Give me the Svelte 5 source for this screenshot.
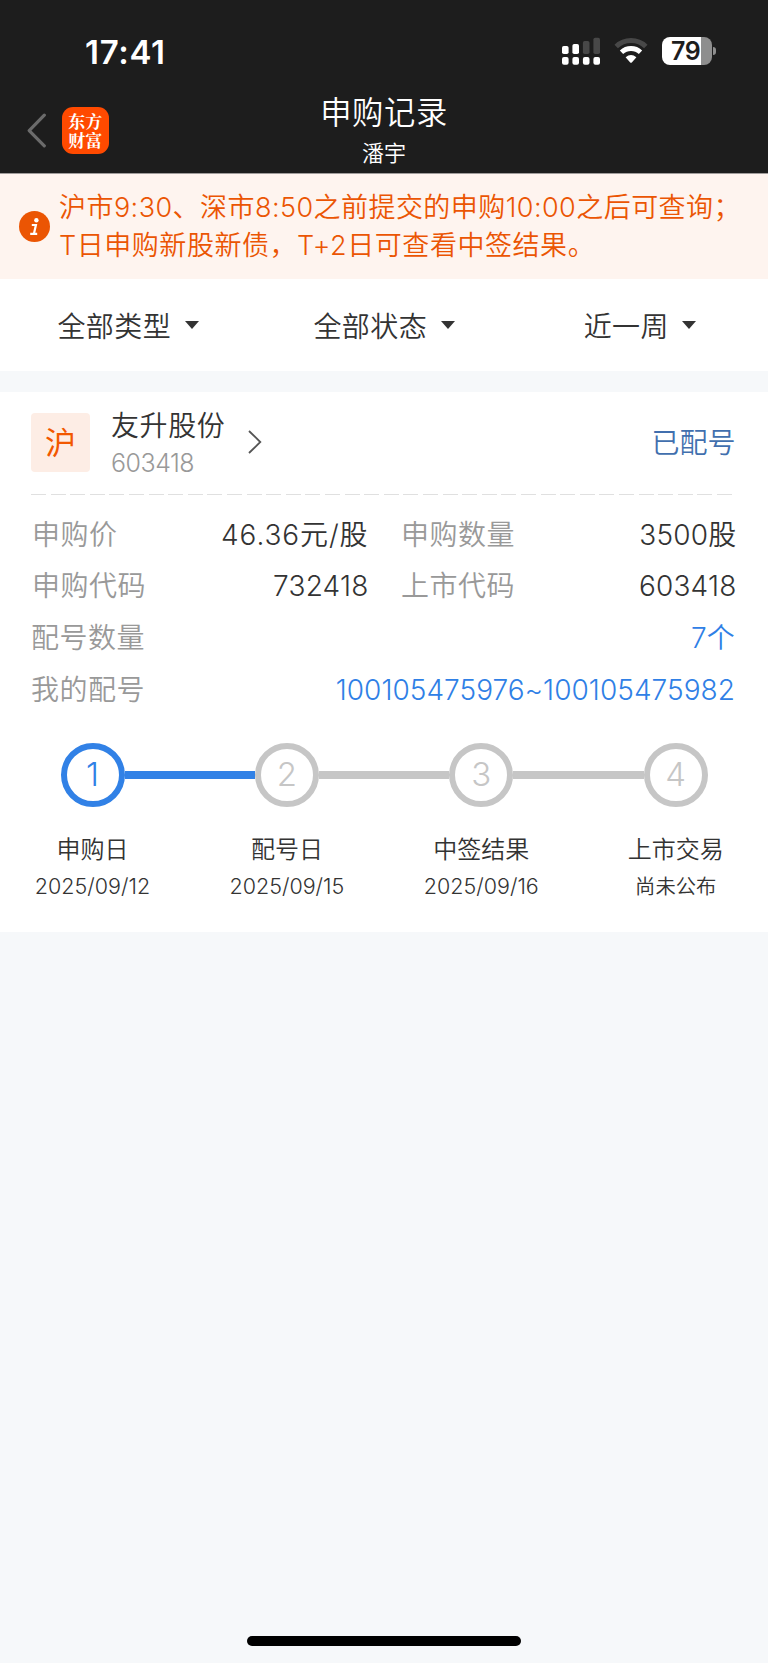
<script>
  const filters = ['全部类型', '全部状态', '近一周'];
  const details = [
    ['申购价', '46.36元/股', '申购数量', '3500股'],
    ['申购代码', '732418', '上市代码', '603418']
  ];
  const steps = [
    { n: 1, name: '申购日', date: '2025/09/12', active: true },
    { n: 2, name: '配号日', date: '2025/09/15' },
    { n: 3, name: '中签结果', date: '2025/09/16' },
    { n: 4, name: '上市交易', date: '尚未公布', plain: true }
  ];
</script>

<div class="page">
  <header>
    <div class="status">
      <span class="clock">17:41</span>
      <div class="indicators">
        <svg class="signal" width="39" height="28" viewBox="0 0 39 28">
          <g fill="#fff">
            <rect x="0" y="9" width="6.6" height="8" rx="1.8" />
            <rect x="10.4" y="7" width="6.6" height="10" rx="1.8" />
            <rect x="0" y="20" width="6.6" height="7.8" rx="2" />
            <rect x="10.4" y="20" width="6.6" height="7.8" rx="2" />
            <rect x="20.9" y="20" width="6.6" height="7.8" rx="2" />
            <rect x="31.4" y="20" width="6.6" height="7.8" rx="2" />
          </g>
          <g fill="#484848">
            <rect x="20.9" y="4" width="6.6" height="13" rx="1.8" />
            <rect x="31.4" y="0.7" width="6.6" height="16.3" rx="1.8" />
          </g>
        </svg>
        <svg class="wifi" width="34" height="26" viewBox="0 0 34 26">
          <path d="M2.2 8.5 A21.5 21.5 0 0 1 31.8 8.5" fill="none" stroke="#484848" stroke-width="5" />
          <path d="M7.5 14.3 A13.8 13.8 0 0 1 26.5 14.3" fill="none" stroke="#fff" stroke-width="4.8" />
          <path d="M11.6 19.2 Q17 14.8 22.4 19.2 L17.8 24.4 Q17 25.2 16.2 24.4 Z" fill="#fff" />
        </svg>
        <div class="battery"><span>79</span></div>
        <i class="nub"></i>
      </div>
    </div>
    <div class="nav">
      <div class="left">
        <svg width="20" height="36" viewBox="0 0 20 36">
          <path d="M17.3 2.2 L2.2 17.6 L17.3 32.8" fill="none" stroke="#6b6b6b" stroke-width="3.2" stroke-linecap="round" stroke-linejoin="round" />
        </svg>
        <div class="logo"><span>东方<br />财富</span></div>
      </div>
      <div class="titles">
        <h1>申购记录</h1>
        <p>潘宇</p>
      </div>
      <div></div>
    </div>
  </header>

  <section class="notice">
    <svg width="31" height="31" viewBox="0 0 31 31">
      <circle cx="15.5" cy="15.5" r="15.5" fill="#eb5503" />
      <circle cx="17.4" cy="9.2" r="2.2" fill="#fff" />
      <path d="M12.8 14 H16.9 L15 22.6 M11.2 22.8 H18.2" fill="none" stroke="#fff" stroke-width="2.2" />
    </svg>
    <div class="lines">
      <p class="first">沪市9:30、深市8:50之前提交的申购10:00之后可查询；</p>
      <p class="second">T日申购新股新债，T+2日可查看中签结果。</p>
    </div>
  </section>

  <nav class="filters">
    {#each filters as f}
      <div class="filter">
        <span>{f}</span>
        <svg width="14" height="8" viewBox="0 0 14 8"><path d="M0 0 H14 L7 8 Z" fill="#333" /></svg>
      </div>
    {/each}
  </nav>

  <main>
    <div class="stock">
      <div class="market">沪</div>
      <div class="names">
        <span class="name">友升股份</span>
        <span class="code">603418</span>
      </div>
      <svg class="go" width="14" height="24" viewBox="0 0 14 24"><path d="M1 1 L12.3 12 L1 23" fill="none" stroke="#555" stroke-width="1.8" /></svg>
      <span class="state">已配号</span>
    </div>
    <div class="dash"></div>
    <div class="details">
      {#each details as row, i}
        <div class="row two">
          <span class="label inset">{row[0]}</span><span class="value" class:wide={i === 0}>{row[1]}</span>
          <span class="label right">{row[2]}</span><span class="value">{row[3]}</span>
        </div>
      {/each}
      <div class="row"><span class="label">配号数量</span><span class="value blue">7个</span></div>
      <div class="row"><span class="label">我的配号</span><span class="value blue long">100105475976~100105475982</span></div>
    </div>
    <div class="steps">
      {#each steps as s}
        <div class="step" class:active={s.active}>
          <div class="track"><i></i><b>{s.n}</b><i class="next"></i></div>
          <span class="step-name">{s.name}</span>
          <span class="date" class:plain={s.plain}>{s.date}</span>
        </div>
      {/each}
    </div>
  </main>

  <footer><div class="home"></div></footer>
</div>

<style>
  :global(body) { margin: 0; background: #f6f8fa; }
  .page {
    width: 768px; height: 1663px; display: flex; flex-direction: column;
    font-family: Inter, "Noto Sans CJK SC", sans-serif; font-weight: 350;
    color: #333; background: #f6f8fa; overflow: hidden; white-space: nowrap;
  }
  h1, p { margin: 0; font-weight: 350; }
  svg { display: block; flex: none; }
  header { height: 173px; background: #1d1d1d; color: #fff; border-bottom: 1px solid #a09c9b; flex: none; }
  .status { height: 94px; display: flex; justify-content: space-between; padding: 0 52px 0 85px; box-sizing: border-box; }
  .clock { font-size: 33px; font-weight: 600; line-height: 40px; padding-top: 31.5px; letter-spacing: 0.7px; }
  .indicators { display: flex; padding-top: 37px; align-items: flex-start; }
  .wifi { margin: 1px 14px 0 13px; }
  .battery {
    width: 49.5px; height: 28px; border-radius: 8px; color: #1d1d1d; box-sizing: border-box;
    background: linear-gradient(90deg, #fff 39px, #8e8e8e 39px);
    font-size: 25px; font-weight: 600; line-height: 28px; padding-left: 9px; letter-spacing: -0.5px;
  }
  .nub { width: 3px; height: 8px; background: #8e8e8e; border-radius: 0 4px 4px 0; margin: 10px 0 0 1.5px; }
  .nav { display: grid; grid-template-columns: 1fr 200px 1fr; height: 79px; }
  .left { display: flex; padding: 13px 0 0 27px; }
  .left svg { margin-top: 6px; }
  .logo {
    margin-left: 15px; width: 46.5px; height: 46.5px; border-radius: 11px; background: #ff4a00;
    display: flex; align-items: center; justify-content: center;
    font-family: "Noto Serif CJK SC", "Noto Sans CJK SC", sans-serif; font-weight: 700; font-size: 17px; line-height: 19.5px;
  }
  .titles { text-align: center; }
  h1 { font-size: 31.3px; line-height: 39px; letter-spacing: 0.6px; }
  .titles p { font-size: 22px; line-height: 30px; padding-top: 4.5px; }
  .notice { height: 105px; flex: none; background: #fef4ef; color: #eb5503; display: flex; font-size: 27px; box-sizing: border-box; padding: 15px 0 0 18.5px; }
  .notice svg { margin-top: 21.5px; }
  .lines { margin-left: 9.5px; line-height: 37.5px; }
  .first { letter-spacing: 0.45px; }
  .second { letter-spacing: 0.55px; }
  .filters { display: grid; grid-template-columns: repeat(3, 256px); height: 92px; flex: none; background: #fff; }
  .filter { display: flex; align-items: center; justify-content: center; gap: 13.5px; font-size: 28px; letter-spacing: 0.4px; }
  .filter span { margin-top: -1px; }
  main { margin-top: 20.5px; height: 540.5px; background: #fff; flex: none; }
  .stock { display: flex; height: 102px; padding: 0 33px 0 31px; }
  .market { width: 59px; height: 59px; margin-top: 21.5px; border-radius: 4px; background: #fdede5; color: #f25800; font-size: 31px; line-height: 59px; text-align: center; font-weight: 400; }
  .names { margin: 15.5px 0 0 21px; width: 118px; display: flex; flex-direction: column; }
  .name { font-size: 28px; line-height: 38px; letter-spacing: 0.6px; }
  .code { font-size: 25px; line-height: 36px; color: #999; letter-spacing: -0.5px; font-weight: 300; }
  .go { margin: 38.5px 0 0 19px; }
  .state { margin: 32px -0.5px 0 auto; font-size: 28px; line-height: 38px; color: #416fae; }
  .dash { height: 1.5px; width: 701px; margin-left: 31px; background: repeating-linear-gradient(90deg, #e0e0e0 0 15px, transparent 15px 19.6px); }
  .details { padding: 13.5px 33px 0 31px; }
  .row { display: flex; justify-content: space-between; height: 51.8px; line-height: 52px; font-size: 28px; }
  .two { display: grid; grid-template-columns: 130px 207.5px 148.5px 219.5px; }
  .label { color: #999; letter-spacing: 0.5px; }
  .inset { padding-left: 1px; }
  .right { padding-left: 32.5px; }
  .value { text-align: right; letter-spacing: 0.2px; }
  .wide { letter-spacing: 0.9px; }
  .wide ~ .value { letter-spacing: 0.2px; }
  .long { letter-spacing: 0.05px; }
  .blue { color: #2f80e6; }
  .steps { display: grid; grid-template-columns: repeat(4, 194.4px); margin: 27px 0 0 -4.7px; }
  .step { display: flex; flex-direction: column; align-items: center; }
  .track { display: flex; align-items: center; width: 100%; height: 64px; }
  .track i { flex: 1; height: 8px; background: #c6c6c6; }
  .track b { width: 64px; height: 64px; box-sizing: border-box; border: 6.5px solid #c6c6c6; border-radius: 50%; text-align: center; line-height: 51px; font-size: 33px; font-weight: 300; color: #c6c6c6; }
  .step:first-child i:first-child, .step:last-child .next { background: none; }
  .step b { flex: none; }
  .active b { color: #3181e6; border-color: #3181e6; }
  .active .next, .active + .step i:first-child { background: #3181e6; }
  .step-name { font-size: 24px; line-height: 34px; margin-top: 26px; }
  .date { font-size: 21.5px; line-height: 30px; margin-top: 4px; letter-spacing: 0; }
  .plain { font-size: 20.3px; padding-top: 1px; }
  footer { margin-top: auto; padding-bottom: 17px; display: flex; justify-content: center; }
  .home { width: 274px; height: 10px; border-radius: 5px; background: #000; }
</style>
